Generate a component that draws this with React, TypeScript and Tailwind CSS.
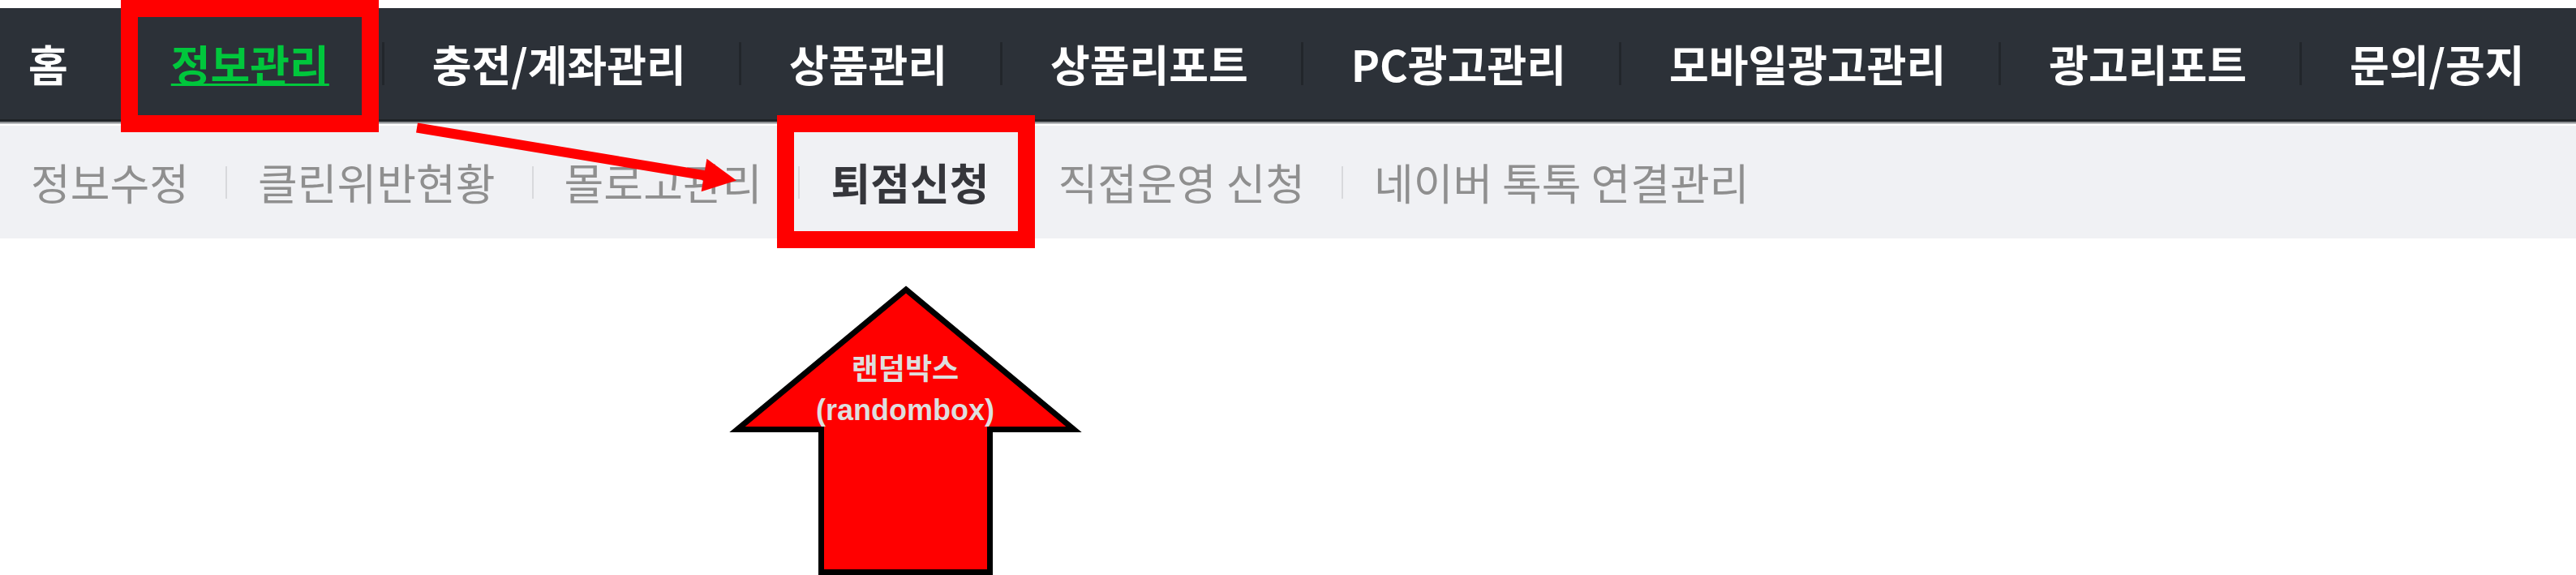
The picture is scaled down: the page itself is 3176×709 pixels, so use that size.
import React from 'react';

const mainMenu = ['홈', '정보관리', '충전/계좌관리', '상품관리', '상품리포트', 'PC광고관리', '모바일광고관리', '광고리포트', '문의/공지'];
const subMenu = ['정보수정', '클린위반현황', '몰로고관리', '퇴점신청', '직접운영 신청', '네이버 톡톡 연결관리'];

const App: React.FC = () => {
  const activeMain = '정보관리';
  const activeSub = '퇴점신청';

  return (
    <div className="relative w-[3176px] h-[709px] overflow-hidden bg-white pt-[10px] font-['Noto_Sans_CJK_KR','Noto_Sans',sans-serif]">
      {/* Main menu */}
      <nav className="h-[140px] bg-[#2c3138] border-b-[3px] border-[#1f2327] flex items-center pl-[35px]">
        {mainMenu.map((item, i) => (
          <React.Fragment key={item}>
            {i > 0 && <span className="w-[3px] h-[53px] bg-[#22262b] ml-[65px] mr-[59px]" />}
            <a
              className={`text-[53px] font-bold leading-none whitespace-nowrap ${
                item === activeMain
                  ? 'text-[#00c73c] underline decoration-[3px] underline-offset-[2px]'
                  : 'text-white'
              }`}
            >
              {item}
            </a>
          </React.Fragment>
        ))}
      </nav>
      <div className="h-[2px] bg-[#8e9194]" />
      <div className="h-[1px] bg-[#cfd0d2]" />
      <div className="h-[2px] bg-white" />

      {/* Sub menu */}
      <div className="h-[139px] bg-[#f0f1f4] flex items-center pl-[38px]">
        {subMenu.map((item, i) => (
          <React.Fragment key={item}>
            {i > 0 && <span className="w-[2px] h-[40px] bg-[#d8d9dc] ml-[45px] mr-[38px]" />}
            <a
              className={`text-[53px] leading-none whitespace-nowrap ${
                item === activeSub ? 'font-bold text-[#35363b]' : 'text-[#8f8f8f]'
              }`}
            >
              {item}
            </a>
          </React.Fragment>
        ))}
      </div>

      {/* Annotation boxes */}
      <div className="absolute left-[149px] top-0 w-[318px] h-[163px] border-[21px] border-[#ff0000]" />
      <div className="absolute left-[958px] top-[142px] w-[318px] h-[164px] border-[21px] border-[#ff0000]" />

      {/* Annotation arrows */}
      <svg className="absolute inset-0 pointer-events-none" width="3176" height="709" viewBox="0 0 3176 709">
        <line x1="514" y1="157.5" x2="870" y2="216.5" stroke="#ff0000" strokeWidth="12" />
        <polygon points="908,222.5 871.4,195.8 864.6,236.2" fill="#ff0000" />
        <path
          d="M1117 357 L1324 529.5 L1220.5 529.5 L1220.5 705.5 L1012.5 705.5 L1012.5 529.5 L909 529.5 Z"
          fill="#ff0000"
          stroke="#000000"
          strokeWidth="7"
          strokeMiterlimit="10"
        />
      </svg>

      <div className="absolute left-[1116px] top-[431px] -translate-x-1/2 text-center text-[36px] leading-[50px] font-bold text-[#dedede] whitespace-nowrap font-['Liberation_Sans','Noto_Sans_CJK_KR',sans-serif]">
        <div>랜덤박스</div>
        <div>(randombox)</div>
      </div>
    </div>
  );
};

export default App;
